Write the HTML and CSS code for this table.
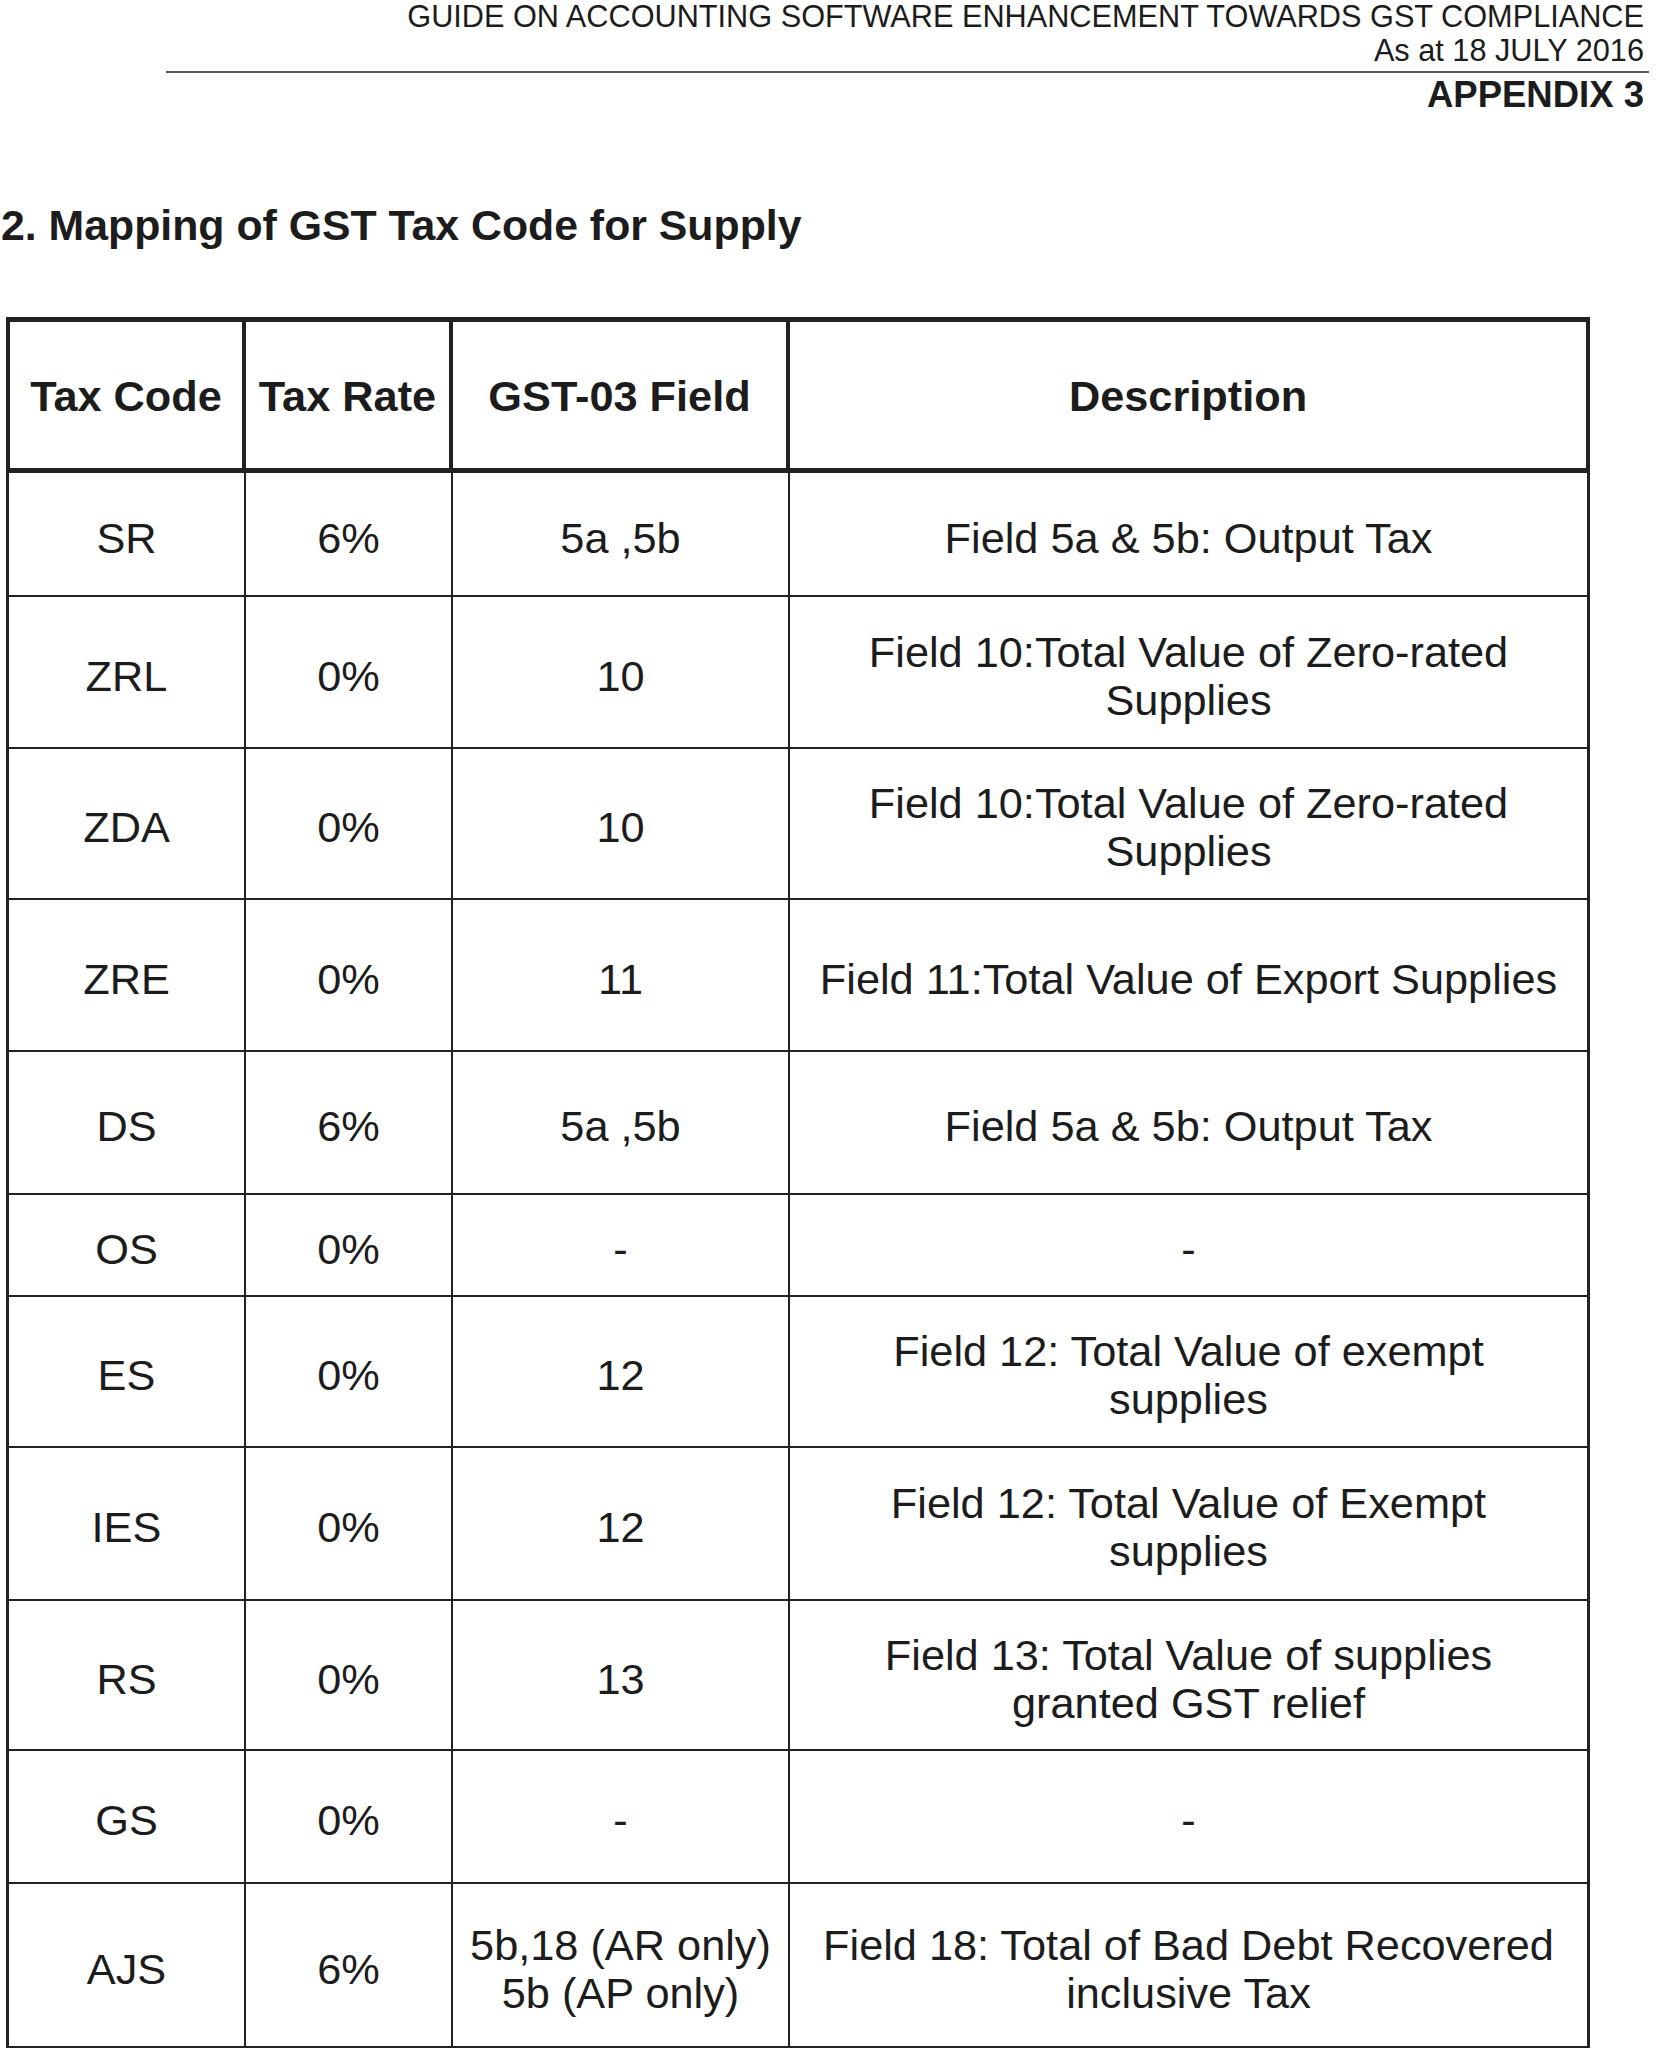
FILE: index.html
```html
<!DOCTYPE html>
<html lang="en">
<head>
<meta charset="utf-8">
<title>Mapping of GST Tax Code for Supply</title>
<link rel="stylesheet" href="styles.css">
</head>
<body>
<div class="page">
  <header class="doc-header">
    <div class="doc-title">GUIDE ON ACCOUNTING SOFTWARE ENHANCEMENT TOWARDS GST COMPLIANCE</div>
    <div class="doc-date">As at 18 JULY 2016</div>
    <div class="doc-rule"></div>
    <div class="doc-appendix">APPENDIX 3</div>
  </header>

  <h1 class="section-title">2. Mapping of GST Tax Code for Supply</h1>

  <table class="tax-table">
    <thead>
      <tr class="head-row">
        <th class="c-code">Tax Code</th>
        <th class="c-rate">Tax Rate</th>
        <th class="c-field">GST-03 Field</th>
        <th class="c-desc">Description</th>
      </tr>
    </thead>
    <tbody>
      <tr class="r124">
        <td>SR</td><td>6%</td><td>5a ,5b</td><td>Field 5a &amp; 5b: Output Tax</td>
      </tr>
      <tr class="r152">
        <td>ZRL</td><td>0%</td><td>10</td><td>Field 10:Total Value of Zero-rated<br>Supplies</td>
      </tr>
      <tr class="r151">
        <td>ZDA</td><td>0%</td><td>10</td><td>Field 10:Total Value of Zero-rated<br>Supplies</td>
      </tr>
      <tr class="r152">
        <td>ZRE</td><td>0%</td><td>11</td><td>Field 11:Total Value of Export Supplies</td>
      </tr>
      <tr class="r143">
        <td>DS</td><td>6%</td><td>5a ,5b</td><td>Field 5a &amp; 5b: Output Tax</td>
      </tr>
      <tr class="r102">
        <td>OS</td><td>0%</td><td>-</td><td>-</td>
      </tr>
      <tr class="r151">
        <td>ES</td><td>0%</td><td>12</td><td>Field 12: Total Value of exempt<br>supplies</td>
      </tr>
      <tr class="r153">
        <td>IES</td><td>0%</td><td>12</td><td>Field 12: Total Value of Exempt<br>supplies</td>
      </tr>
      <tr class="r150">
        <td>RS</td><td>0%</td><td>13</td><td>Field 13: Total Value of supplies<br>granted GST relief</td>
      </tr>
      <tr class="r133">
        <td>GS</td><td>0%</td><td>-</td><td>-</td>
      </tr>
      <tr class="r164">
        <td>AJS</td><td>6%</td><td>5b,18 (AR only)<br>5b (AP only)</td><td>Field 18: Total of Bad Debt Recovered<br>inclusive Tax</td>
      </tr>
    </tbody>
  </table>
</div>
</body>
</html>
```

FILE: styles.css
```css
html, body {
  margin: 0;
  padding: 0;
  background: #ffffff;
}

body {
  font-family: "Liberation Sans", Arial, sans-serif;
  color: #1c1c1c;
}

.page {
  width: 1655px;
  height: 2048px;
  overflow: hidden;
}

.doc-header {
  display: flex;
  flex-direction: column;
  align-items: flex-end;
  padding-right: 11px;
}

.doc-title {
  font-size: 30.7px;
  line-height: 34.4px;
  white-space: nowrap;
}

.doc-date {
  font-size: 30.7px;
  line-height: 34.4px;
  white-space: nowrap;
}

.doc-rule {
  align-self: stretch;
  height: 2px;
  margin: 2px -5px 0 166px;
  background: #5a5a5a;
}

.doc-appendix {
  font-size: 36.5px;
  line-height: 40px;
  font-weight: bold;
  margin-top: 2px;
  white-space: nowrap;
}

.section-title {
  margin: 86px 0 0 1px;
  font-size: 42.8px;
  line-height: 48px;
  font-weight: bold;
  white-space: nowrap;
}

.tax-table {
  margin: 68px 0 0 6px;
  width: 1584px;
  table-layout: fixed;
  border-collapse: separate;
  border-spacing: 0;
  font-size: 43.3px;
  line-height: 48px;
}

.tax-table th,
.tax-table td {
  box-sizing: border-box;
  padding: 0 6px;
  text-align: center;
  vertical-align: middle;
  white-space: nowrap;
  border-color: #222222;
  border-style: solid;
  border-width: 0;
}

.tax-table th {
  font-weight: bold;
  font-size: 43.3px;
  padding-top: 2px;
  border-top-width: 5px;
  border-bottom-width: 5px;
  border-right-width: 4px;
}

.tax-table th:first-child {
  border-left-width: 4px;
}

.tax-table td {
  font-weight: normal;
  padding-top: 8px;
  border-right-width: 2px;
  border-bottom-width: 2px;
}

.tax-table td:first-child {
  border-left-width: 3px;
}

.tax-table td:last-child {
  border-right-width: 3px;
}

.c-code { width: 240px; }
.c-rate { width: 207px; }
.c-field { width: 337px; }
.c-desc { width: 800px; }

.head-row { height: 156px; }
.r102 { height: 102px; }
.r124 { height: 124px; }
.r133 { height: 133px; }
.r143 { height: 143px; }
.r150 { height: 150px; }
.r151 { height: 151px; }
.r152 { height: 152px; }
.r153 { height: 153px; }
.r164 { height: 164px; }
```
